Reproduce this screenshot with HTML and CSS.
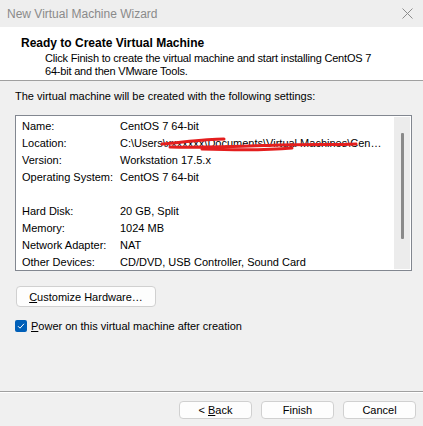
FILE: index.html
```html
<!DOCTYPE html>
<html>
<head>
<meta charset="utf-8">
<link rel="stylesheet" href="styles.css">
</head>
<body>
<div class="window">
  <div class="titlebar">
    <span class="title">New Virtual Machine Wizard</span>
    <svg class="close" width="11" height="11" viewBox="0 0 11 11"><path d="M0.5 0.5L10.5 10.5M10.5 0.5L0.5 10.5" stroke="#8c8c8c" stroke-width="1" fill="none"/></svg>
  </div>
  <div class="header">
    <div class="heading">Ready to Create Virtual Machine</div>
    <div class="desc">Click Finish to create the virtual machine and start installing CentOS 7<br>64-bit and then VMware Tools.</div>
  </div>
  <div class="body">
    <div class="intro">The virtual machine will be created with the following settings:</div>
    <div class="listbox">
      <div class="rows">
        <div class="row"><span class="lbl">Name:</span><span class="val">CentOS 7 64-bit</span></div>
        <div class="row"><span class="lbl">Location:</span><span class="val loc">C:\Users\xxxxxxx\Documents\Virtual Machines\Cen…<svg class="scribble" width="250" height="20" viewBox="0 0 250 20"><path d="M42 9 C 65 7, 85 4, 104 4 M50 12 C 90 13, 130 11, 160 10 C 190 9, 215 10, 236 9 M82 14 C 110 15, 140 16, 172 13" stroke="#e41e1e" stroke-width="3" fill="none" stroke-linecap="round"/></svg></span></div>
        <div class="row"><span class="lbl">Version:</span><span class="val">Workstation 17.5.x</span></div>
        <div class="row"><span class="lbl">Operating System:</span><span class="val">CentOS 7 64-bit</span></div>
        <div class="row"><span class="lbl"></span><span class="val"></span></div>
        <div class="row"><span class="lbl">Hard Disk:</span><span class="val">20 GB, Split</span></div>
        <div class="row"><span class="lbl">Memory:</span><span class="val">1024 MB</span></div>
        <div class="row"><span class="lbl">Network Adapter:</span><span class="val">NAT</span></div>
        <div class="row"><span class="lbl">Other Devices:</span><span class="val">CD/DVD, USB Controller, Sound Card</span></div>
      </div>
      <div class="scrollbar"><div class="thumb"></div></div>
    </div>
    <div class="btn custom"><span><u>C</u>ustomize Hardware…</span></div>
    <label class="check">
      <span class="box"><svg width="12" height="12" viewBox="0 0 12 12"><path d="M3 6.2L5 8.2L9 3.8" stroke="#ffffff" stroke-width="1" fill="none"/></svg></span>
      <span><u>P</u>ower on this virtual machine after creation</span>
    </label>
  </div>
  <div class="footer">
    <div class="btn nav"><span>&lt; <u>B</u>ack</span></div>
    <div class="btn nav"><span>Finish</span></div>
    <div class="btn nav"><span>Cancel</span></div>
  </div>
</div>
</body>
</html>
```
FILE: styles.css
```css
html, body {
  margin: 0;
  padding: 0;
}
body {
  width: 423px;
  height: 426px;
  overflow: hidden;
  font-family: "Liberation Sans", Arial, sans-serif;
  font-size: 11px;
  color: #000;
}
.window {
  width: 423px;
  height: 426px;
  background: #f0f0f0;
  display: flex;
  flex-direction: column;
}
.titlebar {
  height: 27px;
  background: #eeeeee;
  display: flex;
  align-items: center;
  justify-content: space-between;
  padding: 0 10px 0 7px;
  box-sizing: border-box;
}
.title {
  color: #8a8a8a;
  font-size: 12px;
}
.close {
  display: block;
}
.header {
  height: 54px;
  background: #ffffff;
  border-bottom: 1px solid #a0a0a0;
  box-sizing: border-box;
  padding: 8px 0 0 21px;
}
.heading {
  font-weight: bold;
  font-size: 12px;
  line-height: 16px;
}
.desc {
  padding-left: 24px;
  line-height: 13px;
  margin-top: 1px;
  white-space: nowrap;
  letter-spacing: -0.2px;
}
.body {
  flex: 1;
  padding: 7px 11px 0 15px;
  display: flex;
  flex-direction: column;
  border-bottom: 1px solid #a0a0a0;
}
.intro {
  line-height: 16px;
  margin-bottom: 11px;
}
.listbox {
  height: 156px;
  border: 1px solid #828790;
  background: #ffffff;
  box-sizing: border-box;
  display: flex;
  width: 397px;
}
.rows {
  flex: 1;
  padding: 2px 0 0 6px;
  overflow: hidden;
}
.row {
  display: flex;
  height: 17px;
  line-height: 17px;
  white-space: nowrap;
}
.lbl {
  width: 98px;
  flex: none;
}
.val {
  position: relative;
}
.scribble {
  position: absolute;
  left: 0;
  top: 0;
}
.scrollbar {
  width: 16px;
  flex: none;
  background: #ececec;
  margin: 1px 1px 1px 0;
  display: flex;
  justify-content: center;
  padding-top: 16px;
  box-sizing: border-box;
}
.thumb {
  width: 3px;
  height: 106px;
  background: #8a8a8a;
  border-radius: 1px;
  margin-left: 1px;
}
.btn {
  background: #fdfdfd;
  border: 1px solid #d0d0d0;
  border-radius: 4px;
  box-sizing: border-box;
  display: flex;
  align-items: center;
  justify-content: center;
}
.custom {
  width: 140px;
  height: 21px;
  margin: 15px 0 0 1px;
}
.check {
  display: flex;
  align-items: center;
  margin-top: 13px;
  gap: 4px;
}
.box {
  width: 12px;
  height: 12px;
  background: #005fb8;
  border-radius: 2px;
  display: block;
}
.box svg {
  display: block;
}
.footer {
  height: 34px;
  border-top: 1px solid #ffffff;
  display: flex;
  justify-content: flex-end;
  gap: 9px;
  padding: 8px 7px 0 0;
  box-sizing: border-box;
}
.nav {
  width: 73px;
  height: 18px;
}
```
